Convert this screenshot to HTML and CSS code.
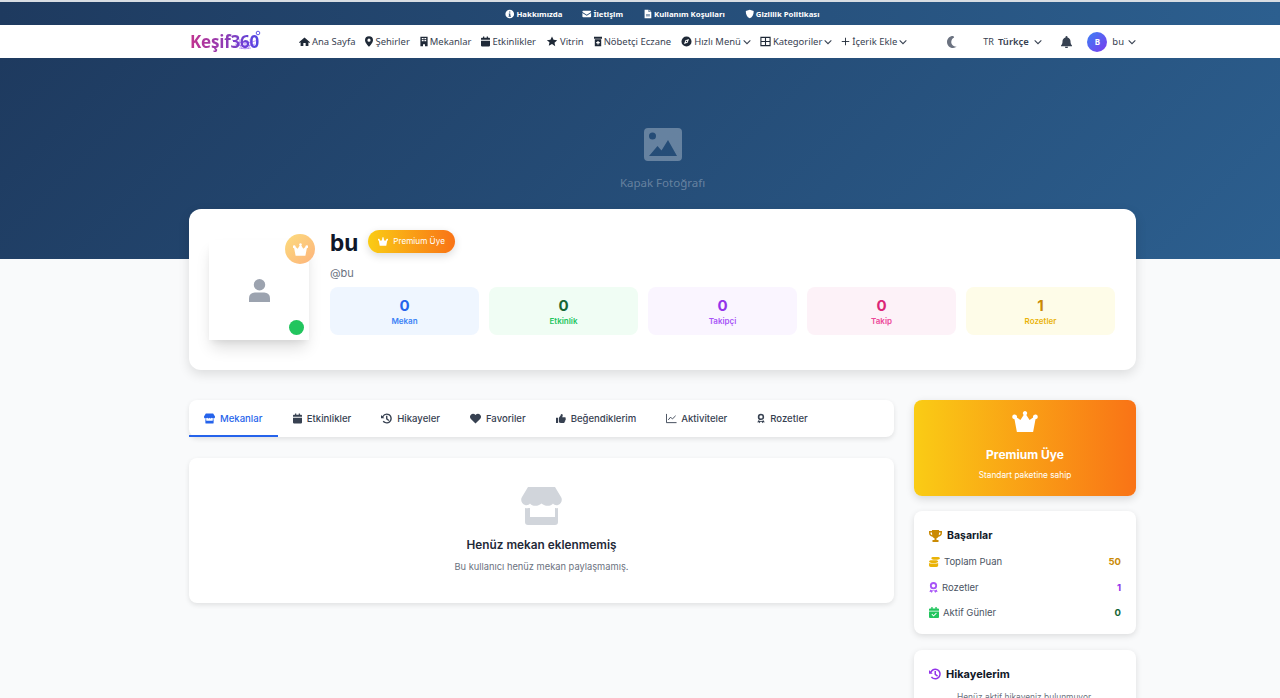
FILE: index.html
```html
<!DOCTYPE html>
<html lang="tr">
<head>
  <meta charset="UTF-8">
  <meta name="viewport" content="width=device-width, initial-scale=1.0">
  <title>Keşif360 - bu</title>
  <link rel="stylesheet" href="styles.css">
</head>
<body>
  <!-- Top bar -->
  <div class="topbar">
    <a><svg viewBox="0 0 24 24"><path fill-rule="evenodd" d="M12 1a11 11 0 1 0 0 22 11 11 0 0 0 0-22zm-1.6 4.500h3.200v3h-3.200zM9.500 10.500h4v6h1.500v2.500H9v-2.500h1.500V13h-1z"/></svg>Hakkımızda</a>
    <a><svg viewBox="0 0 24 24"><path d="M3 4h18a2 2 0 0 1 2 2v.8l-11 7-11-7V6a2 2 0 0 1 2-2zM1 9.200V18a2 2 0 0 0 2 2h18a2 2 0 0 0 2-2V9.200l-11 7z"/></svg>İletişim</a>
    <a><svg viewBox="0 0 24 24"><path fill-rule="evenodd" d="M4 1h10v6h7v16H4zM16 1l5 4.500h-5zM7.500 12v1.500h10V12zm0 4v1.500h10V16z"/></svg>Kullanım Koşulları</a>
    <a><svg viewBox="0 0 24 24"><path d="M12 1l10 3.500c0 9-3 15.500-10 18.500C5 20 2 13.500 2 4.500z"/></svg>Gizlilik Politikası</a>
  </div>

  <!-- Navbar -->
  <nav class="navbar">
    <div class="logo">
      <span class="logo-text">Keşif360</span>
      <svg class="logo-globe" viewBox="0 0 30 20"><g fill="none" stroke="#7c3aed" stroke-width=".6" opacity=".8"><path d="M1 10q13 6 26 0M4 14q10 4 20 0M8 18q6 1.500 12 0"/><path d="M9 9q-2 5 2 10M19 9q2 5-2 10M14 11v8"/></g><circle cx="27" cy="3" r="1.800" fill="none" stroke="#4f46e5" stroke-width=".9"/></svg>
    </div>
    <div class="nav-links">
      <a><svg viewBox="0 0 24 24"><path d="M12 3 0 13.500l1.500 1.500L3.500 13.500V22h6v-6.500h5V22h6v-8.500l2 1.500 1.500-1.500z"/></svg>Ana Sayfa</a>
      <a><svg class="narrow" viewBox="0 0 18 24"><path fill-rule="evenodd" d="M9 0a9 9 0 0 0-9 9c0 4.500 6 12 9 15 3-3 9-10.500 9-15a9 9 0 0 0-9-9zm0 5.500a3.500 3.500 0 1 1 0 7 3.500 3.500 0 0 1 0-7z"/></svg>Şehirler</a>
      <a><svg class="narrow" viewBox="0 0 20 24"><path fill-rule="evenodd" d="M1 0h18v24h-6.500v-5h-5v5H1zM4.500 3.500v3h3v-3zm4 0v3h3v-3zm4 0v3h3v-3zm-8 5v3h3v-3zm4 0v3h3v-3zm4 0v3h3v-3z"/></svg>Mekanlar</a>
      <a><svg class="cal" viewBox="0 0 22 24"><path d="M5 0h3v3h6V0h3v3h3a2 2 0 0 1 2 2v3H0V5a2 2 0 0 1 2-2h3zM0 10h22v12a2 2 0 0 1-2 2H2a2 2 0 0 1-2-2z"/></svg>Etkinlikler</a>
      <a><svg class="wide" viewBox="0 0 24 24"><path d="M12 1l3.400 7.300 7.900 1-5.800 5.400 1.500 7.800L12 17.700 5 21.500l1.500-7.800L.7 9.300l7.900-1z"/></svg>Vitrin</a>
      <a><svg class="narrow" viewBox="0 0 20 24"><path fill-rule="evenodd" d="M0 0h20v5H0zM2 6.500h16V24H2zm6.500 4v3h-3v3h3v3h3v-3h3v-3h-3v-3z"/></svg>Nöbetçi Eczane</a>
      <a><svg viewBox="0 0 24 24"><path fill-rule="evenodd" d="M12 1a11 11 0 1 0 0 22 11 11 0 0 0 0-22zm5.500 5.500-3 8-8 3 3-8zM12 10.500a1.500 1.500 0 1 0 0 3 1.500 1.500 0 0 0 0-3z"/></svg>Hızlı Menü<svg class="chev" viewBox="0 0 12 8"><path d="M1 1.500 6 6.500l5-5"/></svg></a>
      <a><svg class="grid" viewBox="0 0 24 24"><path d="M2 3h20v18H2zM12 3v18M2 12h20"/></svg>Kategoriler<svg class="chev" viewBox="0 0 12 8"><path d="M1 1.500 6 6.500l5-5"/></svg></a>
      <a><svg class="grid plus" viewBox="0 0 24 24"><path d="M12 2v20M2 12h20"/></svg>İçerik Ekle<svg class="chev" viewBox="0 0 12 8"><path d="M1 1.500 6 6.500l5-5"/></svg></a>
    </div>
    <div class="nav-right">
      <svg class="moon" viewBox="0 0 20 24"><path d="M12 0C5 0 0 5.500 0 12s5 12 12 12c3 0 5.500-1 7.500-2.800-6 .8-11-3.500-11-9.200 0-4 2.200-7.500 5.800-9.200C13.500 1 12.800 0 12 0z"/></svg>
      <div class="lang"><span class="lang-code">TR</span><b>Türkçe</b><svg class="chev" viewBox="0 0 12 8"><path d="M1 1.500 6 6.500l5-5"/></svg></div>
      <svg class="bell" viewBox="0 0 22 24"><path d="M11 0a2 2 0 0 1 2 2v.8c3.700.8 6 4 6 7.700 0 4.500 1 6.500 3 8.500v1.500H0V19c2-2 3-4 3-8.500 0-3.700 2.300-6.900 6-7.700V2a2 2 0 0 1 2-2zM8 21.500h6a3 3 0 0 1-6 0z"/></svg>
      <div class="user"><span class="user-avatar">B</span><span>bu</span><svg class="chev" viewBox="0 0 12 8"><path d="M1 1.500 6 6.500l5-5"/></svg></div>
    </div>
  </nav>

  <!-- Cover -->
  <div class="cover">
    <svg class="cover-icon" viewBox="0 0 38 33"><path fill-rule="evenodd" d="M4 0h30a4 4 0 0 1 4 4v25a4 4 0 0 1-4 4H4a4 4 0 0 1-4-4V4a4 4 0 0 1 4-4zm4.500 4.500a3.500 3.500 0 1 0 0 7 3.500 3.500 0 0 0 0-7zM5 28h28l-9-16-6.500 10.500L13.500 18z"/></svg>
    <span>Kapak Fotoğrafı</span>
  </div>

  <main class="container">
    <!-- Profile card -->
    <section class="profile-card">
      <div class="avatar">
        <svg class="avatar-user" viewBox="0 0 22 24"><circle cx="11" cy="6" r="6"/><path d="M6 14h10a6 6 0 0 1 6 6v4H0v-4a6 6 0 0 1 6-6z"/></svg>
        <span class="avatar-crown"><svg viewBox="0 0 26 22"><use href="#crown"/></svg></span>
        <span class="avatar-dot"></span>
      </div>
      <div class="profile-info">
        <div class="name-row">
          <h1>bu</h1>
          <span class="premium-badge"><svg viewBox="0 0 26 22"><use href="#crown"/></svg>Premium Üye</span>
        </div>
        <div class="username">@bu</div>
        <div class="stats">
          <div class="stat stat-blue"><strong>0</strong><span>Mekan</span></div>
          <div class="stat stat-green"><strong>0</strong><span>Etkinlik</span></div>
          <div class="stat stat-purple"><strong>0</strong><span>Takipçi</span></div>
          <div class="stat stat-pink"><strong>0</strong><span>Takip</span></div>
          <div class="stat stat-yellow"><strong>1</strong><span>Rozetler</span></div>
        </div>
      </div>
    </section>

    <div class="columns">
      <div class="col-main">
        <div class="tabs">
          <a class="tab active"><svg viewBox="0 0 24 22"><use href="#store"/></svg>Mekanlar</a>
          <a class="tab"><svg class="tab-narrow" viewBox="0 0 22 24"><path d="M5 0h3v3h6V0h3v3h3a2 2 0 0 1 2 2v3H0V5a2 2 0 0 1 2-2h3zM0 10h22v12a2 2 0 0 1-2 2H2a2 2 0 0 1-2-2z"/></svg>Etkinlikler</a>
          <a class="tab"><svg viewBox="0 0 24 24"><use href="#history"/></svg>Hikayeler</a>
          <a class="tab"><svg viewBox="0 0 24 22"><path d="M12 22 2 12C-1 9-.5 4 2.500 2c3-2 7-1.500 9.500 1.500C14.500.5 18.500 0 21.500 2c3 2 3.500 7 .5 10z"/></svg>Favoriler</a>
          <a class="tab"><svg class="tab-thumb" viewBox="0 0 24 24"><path d="M0 10h5v13H0zM7 10l4-5c.5-2 .5-4 2.500-4S17 3 16 5.500L15 9h6.500c2 0 2.500 2 1.500 3.500.8 1.500.5 3-.8 3.800.4 1.700-.2 3-1.500 3.700 0 2-1 3-3 3H12c-2 0-3.500-1-5-2z"/></svg>Beğendiklerim</a>
          <a class="tab tab-tight"><svg viewBox="0 0 24 22"><path class="line-icon" d="M1 1v19h22M5 14l5-6 4 4 7-7"/></svg>Aktiviteler</a>
          <a class="tab"><svg class="tab-award" viewBox="0 0 20 24"><use href="#award"/></svg>Rozetler</a>
        </div>

        <div class="empty-card">
          <svg class="empty-icon" viewBox="0 0 41 38"><path d="M7 0h27l6 10c2 3 0 7-3 8-2 .5-4 0-5-1.500-1 1.500-3 2.300-5.500 2.300-2 0-4-.8-6-2.300-2 1.500-4 2.300-6 2.300-2.500 0-4.500-.8-5.500-2.300C8 18 6 18.500 4 18c-3-1-5-5-3-8z"/><path d="M4 21c1.200.3 3 .3 5 .1V30h25v-8.900c1 .2 1.800.2 3-.1v14a3 3 0 0 1-3 3H7a3 3 0 0 1-3-3z"/></svg>
          <h3>Henüz mekan eklenmemiş</h3>
          <p>Bu kullanıcı henüz mekan paylaşmamış.</p>
        </div>
      </div>

      <aside class="col-side">
        <div class="premium-card">
          <svg viewBox="0 0 26 22"><use href="#crown"/></svg>
          <h3>Premium Üye</h3>
          <p>Standart paketine sahip</p>
        </div>

        <div class="side-card">
          <h4><svg class="icon-trophy" viewBox="0 0 26 24"><path d="M6 0h14v2h6v4c0 4-3 7-7 7.500-1 1.500-2.500 2.500-4 3V20h4v4H7v-4h4v-3.500c-1.500-.5-3-1.500-4-3C3 13 0 10 0 6V2h6zM3 5v1c0 2 1 3.500 3.500 4.300C6 8.500 6 7 6 5zm20 0h-3c0 2 0 3.500-.5 5.300C22 9.500 23 8 23 6z"/></svg>Başarılar</h4>
          <div class="achieve"><span class="achieve-label"><svg class="icon-coins" viewBox="0 0 24 22"><path d="M10 0h8c3 0 6 1 6 3s-3 3-6 3h-8C7 6 5 5 5 3s2-3 5-3zM6 7h8c3 0 6 1 6 3s-3 3-6 3H6C3 13 0 12 0 10s3-3 6-3zM0 13c1.500 1 3.500 1.500 6 1.500h8c2.500 0 4.500-.5 6-1.500v6c0 2-3 3-6 3H6c-3 0-6-1-6-3z"/></svg>Toplam Puan</span><b class="val-yellow">50</b></div>
          <div class="achieve"><span class="achieve-label"><svg class="icon-award" viewBox="0 0 20 24"><use href="#award"/></svg>Rozetler</span><b class="val-purple">1</b></div>
          <div class="achieve"><span class="achieve-label"><svg class="icon-cal" viewBox="0 0 22 24"><path fill-rule="evenodd" d="M5 0h3v3h6V0h3v3h3a2 2 0 0 1 2 2v3H0V5a2 2 0 0 1 2-2h3zM0 10h22v12a2 2 0 0 1-2 2H2a2 2 0 0 1-2-2zm15.500 2.500L10 18l-3-3-1.500 1.500L10 21l7-7z"/></svg>Aktif Günler</span><b class="val-green">0</b></div>
        </div>

        <div class="side-card story-card">
          <h4 class="story-title"><svg class="icon-history" viewBox="0 0 24 24"><use href="#history"/></svg>Hikayelerim</h4>
          <p class="story-empty">Henüz aktif hikayeniz bulunmuyor.</p>
        </div>
      </aside>
    </div>
  </main>

  <!-- shared icons -->
  <svg class="defs" aria-hidden="true">
    <defs>
      <path id="crown" d="M13 0a2.300 2.300 0 0 1 1.400 4.100l3.400 5.400 3.700-2.700a2.500 2.500 0 1 1 2.500 1.900L21.500 22h-17L2 8.700A2.500 2.500 0 1 1 4.500 6.800l3.700 2.700 3.400-5.400A2.300 2.300 0 0 1 13 0z"/>
      <path id="store" d="M4 0h16l4 6.500c.5 2.500-1.500 4.500-4 4.500-1.200 0-2.300-.5-3-1.500-.8 1-2 1.500-3 1.500s-1.500-.5-2-1.500c-.5 1-1.500 1.500-2 1.500-1 0-2.200-.5-3-1.500-.7 1-1.800 1.500-3 1.500-2.500 0-4.500-2-4-4.500zM3 12.500c1 .2 1.500.2 2 0V16h14v-3.500c.5.200 1 .2 2 0V20a2 2 0 0 1-2 2H5a2 2 0 0 1-2-2z"/>
      <path id="history" d="M12.500 1a11 11 0 1 1-8.800 17.600l2.400-1.800A8 8 0 1 0 5 9.200L7.500 11.700H0V4.200l2.900 2.900A11 11 0 0 1 12.500 1zM11 6h3v6l4 3-1.700 2.400L11 13.500z"/>
      <path id="award" fill-rule="evenodd" d="M10 0a8 8 0 1 1 0 16 8 8 0 0 1 0-16zm0 4a4 4 0 1 0 0 8 4 4 0 0 0 0-8zM3 16.500c1.800 1.200 4 2 7 2s5.200-.8 7-2l2 5.500-3.500-.5-1.500 2.500-2.500-4h-3L6 24l-1.500-2.500L1 22z"/>
    </defs>
  </svg>
</body>
</html>
```
FILE: styles.css
```css
* {
  margin: 0;
  padding: 0;
  box-sizing: border-box;
}
html, body {
  height: 100vh;
  overflow: hidden;
}
body {
  background-color: #f9fafb;
  font-family: Inter, "Noto Sans", sans-serif;
  color: #1f2937;
}
svg {
  fill: currentColor;
  display: block;
  flex-shrink: 0;
}
.defs {
  width: 0;
  height: 0;
  position: absolute;
}

/* top bar */
.topbar {
  height: 25px;
  border-top: 2px solid #d8dde3;
  background: linear-gradient(90deg, #1e3a5f, #2c5f8f);
  display: flex;
  justify-content: center;
  align-items: center;
  gap: 20px;
  padding-left: 45px;
}
.topbar a {
  display: flex;
  align-items: center;
  gap: 1.500px;
  color: #fff;
  font-family: "Noto Sans", sans-serif;
  font-size: 7.800px;
  font-weight: 700;
}
.topbar svg {
  width: 9.500px;
  height: 10px;
}

/* navbar */
.navbar {
  height: 33px;
  background-color: #fff;
  display: flex;
  align-items: center;
  padding: 0 144px 0 190px;
  font-family: "Noto Sans", sans-serif;
  font-size: 9.450px;
  color: #374151;
}
.logo {
  position: relative;
  width: 109px;
  flex-shrink: 0;
}
.logo-text {
  font-family: "Open Sans", sans-serif;
  font-size: 17px;
  font-weight: 700;
  letter-spacing: -.2px;
  background: linear-gradient(90deg, #c2338f, #8b3db8 55%, #4f46e5);
  -webkit-background-clip: text;
  background-clip: text;
  color: transparent;
}
.logo-globe {
  position: absolute;
  left: 41px;
  top: 0;
  width: 30px;
  height: 20px;
}
.nav-links {
  display: flex;
  gap: 10px;
  align-items: center;
}
.nav-links a {
  display: flex;
  align-items: center;
  gap: 2px;
  white-space: nowrap;
}
.nav-links svg {
  width: 11px;
  height: 11px;
  color: #1f2937;
}
.nav-links svg.narrow {
  width: 8px;
}
.nav-links svg.cal {
  width: 9px;
}
.nav-links svg.wide {
  width: 12px;
}
.nav-links svg.grid {
  fill: none;
  stroke: currentColor;
  stroke-width: 2.400;
}
.nav-links svg.plus {
  width: 9px;
}
.nav-links svg.chev, .chev {
  width: 8px;
  height: 6px;
  fill: none;
  stroke: #374151;
  stroke-width: 1.600;
}
.nav-links svg.chev {
  margin-right: -1px;
}
.nav-right {
  margin-left: auto;
  display: flex;
  align-items: center;
}
.moon {
  width: 10px;
  height: 12px;
  color: #6b7280;
}
.lang {
  display: flex;
  align-items: center;
  margin-left: 26px;
  width: 56px;
}
.lang-code {
  font-size: 9px;
  margin-right: 4px;
}
.lang b {
  font-weight: 600;
  margin-right: 5px;
}
.bell {
  width: 11px;
  height: 12px;
  margin-left: 22px;
  color: #374151;
}
.user {
  display: flex;
  align-items: center;
  margin-left: 15px;
}
.user-avatar {
  width: 20px;
  height: 20px;
  border-radius: 50%;
  background: linear-gradient(135deg, #3b82f6, #7c3aed);
  color: #fff;
  font-size: 8px;
  font-weight: 700;
  display: flex;
  align-items: center;
  justify-content: center;
  margin-right: 5px;
}
.user .chev {
  margin-left: 4px;
}

/* cover */
.cover {
  height: 201px;
  background: linear-gradient(135deg, #1e3a5f, #2c5f8f);
  display: flex;
  flex-direction: column;
  align-items: center;
  justify-content: center;
  color: rgba(255, 255, 255, .3);
  font-family: "Noto Sans", sans-serif;
  font-size: 11.500px;
  padding-left: 45px;
}
.cover-icon {
  width: 38px;
  height: 33px;
  margin-bottom: 14px;
}

/* container */
.container {
  width: 947px;
  margin-left: 189px;
}
.profile-card {
  margin-top: -50px;
  height: 161px;
  position: relative;
  background-color: #fff;
  border-radius: 12px;
  box-shadow: 0 4px 12px rgba(0, 0, 0, .12);
  display: flex;
  padding: 20px 21px 0 20px;
  gap: 21px;
}
.avatar {
  position: relative;
  width: 100px;
  height: 100px;
  margin-top: 11px;
  background-color: #fff;
  box-shadow: 0 10px 15px -3px rgba(0, 0, 0, .14), 0 4px 6px -2px rgba(0, 0, 0, .06);
  display: flex;
  align-items: center;
  justify-content: center;
  flex-shrink: 0;
}
.avatar-user {
  width: 21px;
  height: 23px;
  color: #9ca3af;
}
.avatar-crown {
  position: absolute;
  top: -6px;
  right: -6px;
  width: 30px;
  height: 30px;
  border-radius: 50%;
  background: linear-gradient(135deg, #fcdc7d, #fdb37c);
  display: flex;
  align-items: center;
  justify-content: center;
  color: #fff;
}
.avatar-crown svg {
  width: 15px;
  height: 13px;
}
.avatar-dot {
  position: absolute;
  right: 5px;
  bottom: 5px;
  width: 15px;
  height: 15px;
  border-radius: 50%;
  background-color: #22c55e;
}
.profile-info {
  flex: 1;
}
.name-row {
  display: flex;
  align-items: center;
  gap: 10px;
  height: 24px;
}
.name-row h1 {
  font-size: 22.500px;
  font-weight: 700;
  color: #0f172a;
  margin-top: 3px;
}
.premium-badge {
  display: flex;
  align-items: center;
  gap: 5px;
  height: 23px;
  padding: 0 10px;
  border-radius: 12px;
  background: linear-gradient(90deg, #facc15, #f97316);
  box-shadow: 0 3px 8px rgba(0, 0, 0, .14);
  color: #fff;
  font-size: 8.200px;
  font-weight: 400;
}
.premium-badge svg {
  width: 10px;
  height: 9px;
}
.username {
  margin-top: 13px;
  font-size: 11px;
  color: #6b7280;
}
.stats {
  display: flex;
  gap: 10px;
  margin-top: 7px;
}
.stat {
  flex: 1;
  height: 48px;
  border-radius: 8px;
  display: flex;
  flex-direction: column;
  align-items: center;
  justify-content: center;
  gap: 1px;
}
.stat strong {
  font-size: 15px;
  line-height: 18px;
  font-weight: 700;
}
.stat span {
  font-size: 8px;
  font-weight: 600;
}
.stat-blue { background-color: #eff6ff; }
.stat-blue strong { color: #2563eb; }
.stat-blue span { color: #3b82f6; }
.stat-green { background-color: #f0fdf4; }
.stat-green strong { color: #166534; }
.stat-green span { color: #22c55e; }
.stat-purple { background-color: #faf5ff; }
.stat-purple strong { color: #9333ea; }
.stat-purple span { color: #a855f7; }
.stat-pink { background-color: #fdf2f8; }
.stat-pink strong { color: #db2777; }
.stat-pink span { color: #ec4899; }
.stat-yellow { background-color: #fefce8; }
.stat-yellow strong { color: #ca8a04; }
.stat-yellow span { color: #eab308; }

/* columns */
.columns {
  display: flex;
  gap: 20px;
  margin-top: 30px;
  align-items: flex-start;
}
.col-main {
  width: 705px;
}
.col-side {
  width: 222px;
}
.tabs {
  height: 37px;
  background-color: #fff;
  border-radius: 8px;
  box-shadow: 0 2px 5px rgba(0, 0, 0, .1);
  display: flex;
}
.tab {
  display: flex;
  align-items: center;
  gap: 5px;
  padding: 0 15px;
  font-size: 9.550px;
  font-weight: 500;
  color: #374151;
}
.tab svg {
  width: 11px;
  height: 11px;
}
.tab svg.tab-narrow {
  width: 9px;
}
.tab svg.tab-thumb {
  width: 10px;
}
.tab svg.tab-award {
  width: 8px;
}
.tab-tight {
  gap: 4px;
}
.tab .line-icon {
  fill: none;
  stroke: currentColor;
  stroke-width: 2;
}
.tab.active {
  color: #2563eb;
  border-bottom: 2px solid #2563eb;
  padding: 2px 15.500px 0 15px;
}
.empty-card {
  margin-top: 21px;
  height: 145px;
  background-color: #fff;
  border-radius: 8px;
  box-shadow: 0 2px 5px rgba(0, 0, 0, .1);
  display: flex;
  flex-direction: column;
  align-items: center;
  padding-top: 29px;
}
.empty-icon {
  width: 41px;
  height: 38px;
  color: #d1d5db;
}
.empty-card h3 {
  margin-top: 13px;
  font-size: 11.800px;
  font-weight: 600;
  line-height: 14px;
}
.empty-card p {
  margin-top: 9px;
  font-size: 9.300px;
  color: #6b7280;
}

/* sidebar */
.premium-card {
  height: 96px;
  border-radius: 8px;
  background: linear-gradient(90deg, #facc15, #f97316);
  box-shadow: 0 3px 8px rgba(0, 0, 0, .14);
  color: #fff;
  display: flex;
  flex-direction: column;
  align-items: center;
  padding-top: 11px;
}
.premium-card svg {
  width: 26px;
  height: 21px;
}
.premium-card h3 {
  margin-top: 15px;
  font-size: 12px;
  font-weight: 700;
  line-height: 15px;
}
.premium-card p {
  margin-top: 8px;
  font-size: 8.300px;
}
.side-card {
  margin-top: 15px;
  height: 123px;
  background-color: #fff;
  border-radius: 8px;
  box-shadow: 0 2px 6px rgba(0, 0, 0, .12);
  padding: 16px 15px 15px;
}
.side-card h4 {
  display: flex;
  align-items: center;
  gap: 5px;
  font-size: 10.500px;
  font-weight: 700;
  color: #111827;
  line-height: 18px;
  margin-bottom: 4px;
}
.icon-trophy {
  width: 13px;
  height: 12px;
  color: #ca8a04;
}
.achieve {
  display: flex;
  justify-content: space-between;
  align-items: center;
  height: 25.500px;
  font-size: 9.500px;
}
.achieve-label {
  display: flex;
  align-items: center;
  gap: 4px;
  color: #4b5563;
}
.achieve b {
  font-weight: 700;
}
.icon-coins {
  width: 11px;
  height: 10px;
  color: #eab308;
}
.icon-award {
  width: 9px;
  height: 11px;
  color: #a855f7;
}
.icon-cal {
  width: 10px;
  height: 11px;
  color: #22c55e;
}
.val-yellow { color: #ca8a04; }
.val-purple { color: #9333ea; }
.val-green { color: #166534; }
.story-card {
  margin-top: 16px;
  padding-top: 15px;
}
.side-card .story-title {
  font-size: 11px;
}
.icon-history {
  width: 12px;
  height: 12px;
  color: #9333ea;
}
.story-empty {
  margin-top: 9px;
  text-align: center;
  font-size: 8.400px;
  color: #6b7280;
}
```
